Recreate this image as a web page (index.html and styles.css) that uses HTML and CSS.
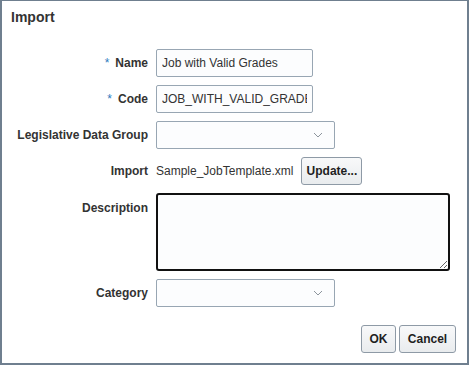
FILE: index.html
```html
<!DOCTYPE html>
<html>
<head>
<meta charset="utf-8">
<link rel="stylesheet" href="styles.css">
</head>
<body>
<div class="dialog">
  <div class="title">Import</div>
  <div class="form">
    <div class="label"><span class="req">*</span>Name</div>
    <div class="field"><input class="text" type="text" value="Job with Valid Grades"></div>

    <div class="label"><span class="req">*</span>Code</div>
    <div class="field"><input class="text" type="text" value="JOB_WITH_VALID_GRADES"></div>

    <div class="label">Legislative Data Group</div>
    <div class="field">
      <div class="select">
        <svg class="chev" width="10" height="6" viewBox="0 0 10 6"><path d="M1 1 L5 5 L9 1" fill="none" stroke="#8d959d" stroke-width="1"/></svg>
      </div>
    </div>

    <div class="label">Import</div>
    <div class="field import-field">
      <span class="filename">Sample_JobTemplate.xml</span>
      <button class="btn btn-update">Update...</button>
    </div>

    <div class="label label-top">Description</div>
    <div class="field"><textarea class="desc"></textarea></div>

    <div class="label">Category</div>
    <div class="field">
      <div class="select">
        <svg class="chev" width="10" height="6" viewBox="0 0 10 6"><path d="M1 1 L5 5 L9 1" fill="none" stroke="#8d959d" stroke-width="1"/></svg>
      </div>
    </div>
  </div>
  <div class="actions">
    <button class="btn btn-ok">OK</button>
    <button class="btn btn-cancel">Cancel</button>
  </div>
</div>
</body>
</html>
```

FILE: styles.css
```css
* { box-sizing: border-box; }
html, body {
  margin: 0;
  padding: 0;
  background: #ffffff;
}
body {
  font-family: "Liberation Sans", Arial, sans-serif;
  font-size: 12px;
  color: #333333;
}
.dialog {
  width: 469px;
  height: 365px;
  border-style: solid;
  border-color: #6f7f8f;
  border-width: 1px 2px 2px 2px;
  background: #ffffff;
  display: flex;
  flex-direction: column;
}
.title {
  font-size: 14px;
  font-weight: bold;
  line-height: 17px;
  padding: 8px 9px 0 9px;
  color: #333333;
}
.form {
  margin-top: 23px;
  display: grid;
  grid-template-columns: 146px 1fr;
  column-gap: 8px;
  row-gap: 8px;
}
.label {
  font-weight: bold;
  text-align: right;
  line-height: 14px;
  height: 28px;
  display: flex;
  align-items: center;
  justify-content: flex-end;
  white-space: nowrap;
  color: #333333;
}
.label-top {
  align-items: flex-start;
  padding-top: 8px;
  height: auto;
}
.req {
  color: #2f7bc0;
  font-weight: normal;
  vertical-align: 3px;
  margin-right: 6px;
  font-size: 12px;
}
.field {
  display: flex;
  align-items: center;
  min-height: 28px;
}
.text {
  width: 157px;
  height: 28px;
  border: 1px solid #98a6b3;
  border-radius: 2px;
  background: #fcfdfe;
  font-family: "Liberation Sans", Arial, sans-serif;
  font-size: 12px;
  color: #333333;
  padding: 0 5px;
  margin: 0;
  outline: none;
}
.select {
  width: 179px;
  height: 28px;
  border: 1px solid #98a6b3;
  border-radius: 2px;
  background: #fcfdfe;
  display: flex;
  align-items: center;
  justify-content: flex-end;
  padding-right: 11px;
}
.chev { display: block; }
.import-field { gap: 8px; }
.filename { color: #333333; }
.btn {
  height: 28px;
  border: 1px solid #8e9aa6;
  border-radius: 3px;
  background: linear-gradient(#f8f9fa, #e9ecee);
  font-family: "Liberation Sans", Arial, sans-serif;
  font-size: 12px;
  font-weight: bold;
  color: #1f1f1f;
  padding: 0 8px;
  margin: 0;
}
.btn-update { width: 61px; padding: 0 4px; }
.btn-ok { width: 35px; padding: 0; }
.btn-cancel { width: 57px; padding: 0; }
.desc {
  width: 294px;
  height: 78px;
  border: 2px solid #111111;
  border-radius: 3px;
  background: #fcfdfe;
  margin: 0;
  outline: none;
  resize: both;
  font-family: "Liberation Sans", Arial, sans-serif;
  font-size: 12px;
}
.actions {
  margin-top: 18px;
  display: flex;
  justify-content: flex-end;
  gap: 3px;
  padding-right: 11px;
}
```
